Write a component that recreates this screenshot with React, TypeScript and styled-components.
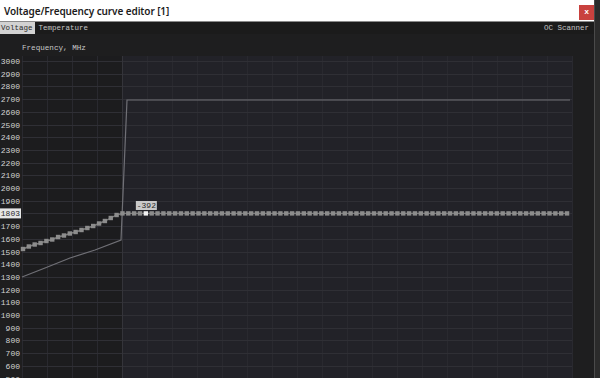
import * as React from "react";
import styled, { createGlobalStyle } from "styled-components";

const GlobalStyle = createGlobalStyle`
  html, body {
    margin: 0;
    padding: 0;
    background: #2a2a2a;
    overflow: hidden;
  }
`;

const MONO = `"Liberation Mono", "DejaVu Sans Mono", monospace`;

const Page = styled.div`
  width: 600px;
  height: 378px;
  display: flex;
  background: #2b2b2b;
`;

const Window = styled.div`
  width: 594px;
  height: 378px;
  display: flex;
  flex-direction: column;
  background: #1f1f1f;
  border-right: 1px solid #4a4a4a;
  overflow: hidden;
`;

const TitleBar = styled.div`
  height: 21px;
  flex: none;
  display: flex;
  align-items: center;
  justify-content: space-between;
  padding: 0 0 0 4px;
  background: #ffffff;
  border-bottom: 1px solid #8a8a8a;
  font-family: "Noto Sans", "Open Sans", sans-serif;
  font-size: 10px;
  font-weight: 600;
  letter-spacing: -0.1px;
  color: #1c1c1c;
`;

const CloseButton = styled.div`
  width: 15px;
  height: 15px;
  margin-top: 3px;
  display: flex;
  align-items: center;
  justify-content: center;
  background: #c9413e;
  color: #fff;
  font-family: ${MONO};
  font-size: 8px;
  line-height: 1;
`;

const TabBar = styled.div`
  height: 12px;
  flex: none;
  display: flex;
  align-items: stretch;
  background: #1b1b1b;
  font-family: ${MONO};
  font-size: 7.5px;
`;

const Tab = styled.div<{ $active?: boolean }>`
  display: flex;
  align-items: center;
  padding: 0 2px 0 1px;
  margin-right: 3px;
  background: ${(p) => (p.$active ? "#d2d2d2" : "transparent")};
  color: ${(p) => (p.$active ? "#2a2a2a" : "#c4c4c4")};
`;

const TabSpacer = styled.div`
  flex: 1;
`;

const ChartArea = styled.div`
  flex: 1;
  display: flex;
  flex-direction: column;
  background: #1e1e1f;
`;

const AxisTitle = styled.div`
  height: 21px;
  flex: none;
  display: flex;
  align-items: center;
  padding: 7px 0 0 22px;
  box-sizing: border-box;
  font-family: ${MONO};
  font-size: 7.6px;
  color: #c8c8c8;
`;

const Plot = styled.svg`
  display: block;
  flex: none;
`;

const Y0 = 61;
const STEP = 12.7;
const yOf = (f: number) => Y0 + ((3000 - f) / 100) * STEP;

const PLOT_L = 22;
const PLOT_R = 572;
const SPLIT = 122;
const TOP = 56;

const FLAT = yOf(1800);

const ramp = [249, 246.5, 244.5, 243, 241, 239.5, 237, 235.5, 233.5, 232, 230, 228, 226, 223.5, 221, 218, 215, 213.4];

const points = Array.from({ length: 94 }, (_, i) => {
  const x = 23 + i * 5.85;
  const y = i < ramp.length ? ramp[i] : FLAT;
  return { x, y };
});

const SELECTED = 21;

const labels = Array.from({ length: 26 }, (_, i) => 3000 - i * 100);

export default function App(): JSX.Element {
  const vlines = Array.from({ length: 23 }, (_, k) => PLOT_L + k * 25);
  const line = points.map((p) => `${p.x},${p.y}`).join(" ");
  const sel = points[SELECTED];

  return (
    <Page>
      <GlobalStyle />
      <Window>
        <TitleBar>
          <span>Voltage/Frequency curve editor [1]</span>
          <CloseButton>x</CloseButton>
        </TitleBar>
        <TabBar>
          <Tab $active>Voltage</Tab>
          <Tab>Temperature</Tab>
          <TabSpacer />
          <Tab>OC Scanner</Tab>
        </TabBar>
        <ChartArea>
          <AxisTitle>Frequency, MHz</AxisTitle>
          <Plot width={594} height={323} viewBox="0 55 594 323">
            {/* plot backgrounds: locked (dark) part and editable part */}
            <rect x={PLOT_L} y={TOP} width={SPLIT - PLOT_L} height={340} fill="#1c1c1e" />
            <rect x={SPLIT} y={TOP} width={PLOT_R - SPLIT} height={340} fill="#222228" />

            {vlines.map((x) => (
              <line key={x} x1={x + 0.5} y1={TOP} x2={x + 0.5} y2={400} stroke="#29292f" strokeWidth={1} />
            ))}
            {labels.map((f) => (
              <line
                key={f}
                x1={PLOT_L}
                y1={Math.round(yOf(f)) + 0.5}
                x2={PLOT_R}
                y2={Math.round(yOf(f)) + 0.5}
                stroke="#2f2f35"
                strokeWidth={1}
              />
            ))}
            <line x1={SPLIT + 0.5} y1={TOP} x2={SPLIT + 0.5} y2={400} stroke="#34343a" />

            {/* default curve */}
            <polyline
              points={`22,277 45,268 70,258 95,250 121,240 127,100 570,100`}
              fill="none"
              stroke="#707076"
              strokeWidth={1.2}
            />

            {/* edited curve */}
            <polyline points={line} fill="none" stroke="#7c7c7c" strokeWidth={1.4} />
            {points.map((p, i) => (
              <rect
                key={i}
                x={p.x - 2.2}
                y={p.y - 2.2}
                width={4.4}
                height={4.4}
                fill={i === SELECTED ? "#f2f2f2" : "#8c8c8c"}
              />
            ))}

            <rect x={sel.x - 10} y={201} width={21} height={9} fill="#c9c9c9" />
            <text x={sel.x + 0.5} y={208.3} fontFamily={MONO} fontSize={8} fill="#2a2a2a" textAnchor="middle">
              -392
            </text>

            {labels.map((f) =>
              f === 1800 ? (
                <g key={f}>
                  <rect x={0} y={yOf(f) - 5} width={21} height={10} fill="#e6e6e6" />
                  <text x={20} y={yOf(f) + 3} fontFamily={MONO} fontSize={8} fill="#2a2a2a" textAnchor="end">
                    1803
                  </text>
                </g>
              ) : (
                <text key={f} x={20} y={yOf(f) + 3} fontFamily={MONO} fontSize={8} fill="#d2d2d2" textAnchor="end">
                  {f}
                </text>
              ),
            )}
          </Plot>
        </ChartArea>
      </Window>
    </Page>
  );
}
